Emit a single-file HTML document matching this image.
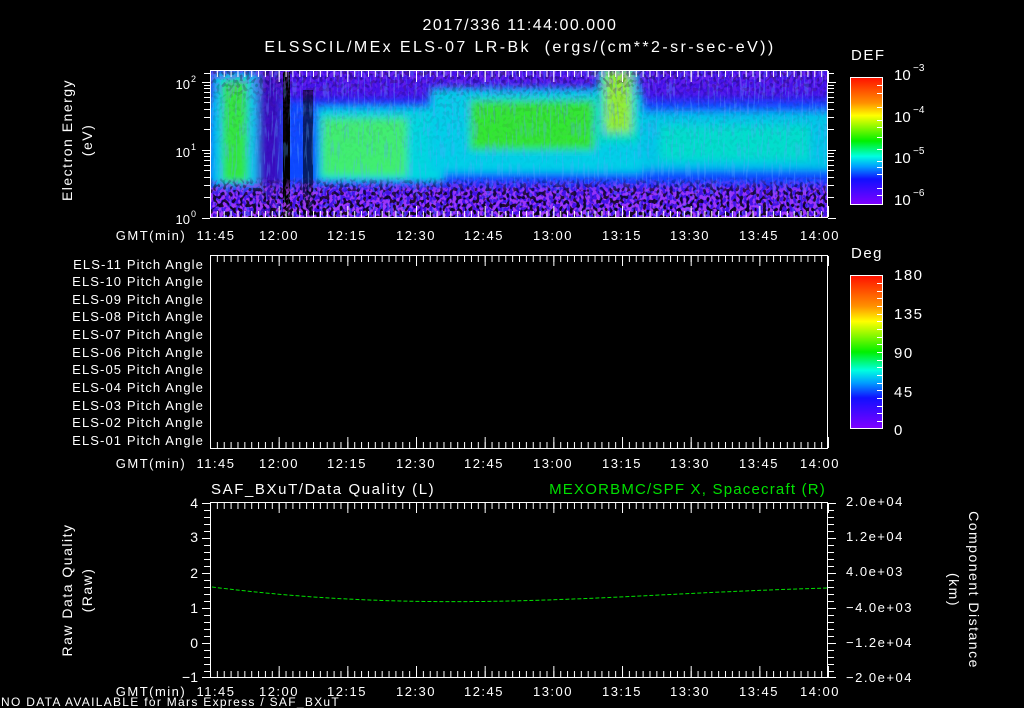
<!DOCTYPE html>
<html><head><meta charset="utf-8"><style>
html,body{margin:0;padding:0;background:#000;}
svg{display:block;}
text{font-family:"Liberation Sans",sans-serif;fill:#fff;}
.w{letter-spacing:1.5px;}
</style></head><body>
<svg width="1024" height="708" viewBox="0 0 1024 708" xmlns="http://www.w3.org/2000/svg">
<defs>
<filter id="bl" x="190" y="50" width="660" height="190" filterUnits="userSpaceOnUse"><feGaussianBlur stdDeviation="4"/></filter>
<filter id="sp1" x="0" y="0" width="1" height="1"><feTurbulence type="fractalNoise" baseFrequency="0.3 0.25" numOctaves="1" seed="4"/><feColorMatrix type="matrix" values="0 0 0 0 0  0 0 0 0 0  0 0 0 0 0  14 0 0 0 -7.3"/></filter>
<filter id="sp2" x="0" y="0" width="1" height="1"><feTurbulence type="fractalNoise" baseFrequency="0.3 0.25" numOctaves="1" seed="9"/><feColorMatrix type="matrix" values="0 0 0 0 0.45  0 0 0 0 0.05  0 0 0 0 1  14 0 0 0 -6.6"/></filter>
<filter id="sp3" x="0" y="0" width="1" height="1"><feTurbulence type="fractalNoise" baseFrequency="0.5 0.05" numOctaves="1" seed="2"/><feColorMatrix type="matrix" values="0 0 0 0 0.1  0 0 0 0 0.4  0 0 0 0 1  12 0 0 0 -6.6"/></filter>
<linearGradient id="cb" x1="0" y1="0" x2="0" y2="1">
<stop offset="0" stop-color="#ff1000"/><stop offset="0.2" stop-color="#ff9000"/><stop offset="0.3" stop-color="#ffff00"/><stop offset="0.5" stop-color="#00f000"/><stop offset="0.62" stop-color="#00ffe0"/><stop offset="0.7" stop-color="#00a0ff"/><stop offset="0.8" stop-color="#1010ff"/><stop offset="1" stop-color="#8000ff"/>
</linearGradient>
<linearGradient id="fade" x1="0" y1="0" x2="0" y2="1"><stop offset="0" stop-color="#fff" stop-opacity="0.35"/><stop offset="0.2" stop-color="#fff" stop-opacity="0.08"/><stop offset="0.72" stop-color="#fff" stop-opacity="0"/><stop offset="0.82" stop-color="#fff" stop-opacity="0.7"/><stop offset="1" stop-color="#fff" stop-opacity="0.9"/></linearGradient>
<mask id="m1"><rect x="210" y="70" width="618" height="148" fill="url(#fade)"/></mask>
<clipPath id="cp"><rect x="210" y="70" width="618" height="148"/></clipPath>
<pattern id="tk" x="210" y="0" width="6.867" height="1" patternUnits="userSpaceOnUse"><rect x="0" y="0" width="1" height="1" fill="#fff"/></pattern>
<pattern id="mj" x="210" y="0" width="68.67" height="1" patternUnits="userSpaceOnUse"><rect x="0" y="0" width="1" height="1" fill="#fff"/></pattern>
</defs>

<text x="520" y="30" font-size="16" text-anchor="middle" class="w">2017/336 11:44:00.000</text>
<text x="520" y="52" font-size="16" text-anchor="middle" xml:space="preserve" style="letter-spacing:2.4px">ELSSCIL/MEx ELS-07 LR-Bk  (ergs/(cm**2-sr-sec-eV))</text>

<!-- Spectrogram -->
<g clip-path="url(#cp)">
<rect x="210" y="70" width="618" height="148" fill="#4412e8"/>
<g filter="url(#bl)">
<rect x="205" y="100" width="630" height="85" fill="#1048ff"/>
<rect x="212" y="72" width="45" height="115" fill="#00c8f0"/>
<rect x="318" y="108" width="125" height="74" fill="#00d8e0"/>
<rect x="430" y="88" width="212" height="85" fill="#00d0e8"/>
<rect x="598" y="68" width="40" height="75" fill="#00e0c0"/>
<rect x="640" y="112" width="195" height="58" fill="#00c8e8"/>
<rect x="222" y="80" width="26" height="102" fill="#30e840"/>
<rect x="322" y="118" width="85" height="58" fill="#40f070"/>
<rect x="470" y="100" width="125" height="50" fill="#30e830"/>
<rect x="605" y="70" width="26" height="62" fill="#90f030"/>
<rect x="660" y="125" width="150" height="35" fill="#00e8c0" opacity="0.7"/>
<rect x="258" y="72" width="24" height="145" fill="#3810c0"/>
</g>
<rect x="283" y="72" width="7" height="146" fill="#000"/>
<rect x="303" y="90" width="10" height="128" fill="#000" opacity="0.6"/>
<rect x="210" y="70" width="618" height="148" filter="url(#sp3)" opacity="0.3"/>
<rect x="210" y="70" width="618" height="148" filter="url(#sp2)" mask="url(#m1)"/>
<rect x="210" y="70" width="618" height="148" filter="url(#sp1)" mask="url(#m1)"/>
</g>
<rect x="210.5" y="70.5" width="617" height="147" fill="none" stroke="#fff"/>
<rect x="210" y="71" width="619" height="6" fill="url(#tk)"/>
<rect x="210" y="71" width="619" height="11" fill="url(#mj)"/>
<rect x="210" y="211" width="619" height="6" fill="url(#tk)"/>
<rect x="210" y="206" width="619" height="11" fill="url(#mj)"/>
<g stroke="#fff" stroke-width="1">
<path d="M202 218.5h8M202 150.5h8M202 82.5h8 M204 197.5h6M204 185.5h6M204 177.5h6M204 170.5h6M204 165.5h6M204 160.5h6M204 156.5h6M204 153.5h6 M204 129.5h6M204 117.5h6M204 109.5h6M204 102.5h6M204 97.5h6M204 92.5h6M204 88.5h6M204 85.5h6M204 73.5h6"/>
<path d="M828 218.5h8M828 150.5h8M828 82.5h8 M828 197.5h6M828 185.5h6M828 177.5h6M828 170.5h6M828 165.5h6M828 160.5h6M828 156.5h6M828 153.5h6 M828 129.5h6M828 117.5h6M828 109.5h6M828 102.5h6M828 97.5h6M828 92.5h6M828 88.5h6M828 85.5h6M828 73.5h6"/>
</g>
<text x="190" y="89" font-size="13" text-anchor="end">10</text><text x="191" y="82" font-size="9">2</text>
<text x="190" y="157" font-size="13" text-anchor="end">10</text><text x="191" y="150" font-size="9">1</text>
<text x="190" y="224" font-size="13" text-anchor="end">10</text><text x="191" y="217" font-size="9">0</text>
<text transform="translate(72,140) rotate(-90)" font-size="14" text-anchor="middle" class="w">Electron Energy</text>
<text transform="translate(92,140) rotate(-90)" font-size="14" text-anchor="middle" class="w">(eV)</text>

<text x="851" y="60" font-size="15" class="w">DEF</text>
<rect x="850.5" y="77.5" width="32" height="127" fill="url(#cb)" stroke="#fff"/>
<g stroke="#fff"><path d="M877 85.5h5M877 93.5h5M877 107.5h5M877 120.5h5M877 127.5h5M877 137.5h5M877 149.5h5M877 161.5h5M877 167.5h5M877 174.5h5M877 188.5h5M877 195.5h5"/></g>
<text x="894" y="80" font-size="15">10</text><text x="913" y="71" font-size="10">−3</text>
<text x="894" y="122" font-size="15">10</text><text x="913" y="113" font-size="10">−4</text>
<text x="894" y="163" font-size="15">10</text><text x="913" y="154" font-size="10">−5</text>
<text x="894" y="205" font-size="15">10</text><text x="913" y="196" font-size="10">−6</text>

<g font-size="13" text-anchor="middle" class="w">
<text x="151" y="240">GMT(min)</text>
<text x="216" y="240">11:45</text><text x="279" y="240">12:00</text><text x="347" y="240">12:15</text><text x="416" y="240">12:30</text><text x="484" y="240">12:45</text><text x="553" y="240">13:00</text><text x="622" y="240">13:15</text><text x="690" y="240">13:30</text><text x="759" y="240">13:45</text><text x="820" y="240">14:00</text>
</g>

<!-- Pitch panel -->
<rect x="210.5" y="255.5" width="617" height="193" fill="none" stroke="#fff"/>
<rect x="210" y="256" width="619" height="6" fill="url(#tk)"/>
<rect x="210" y="256" width="619" height="10" fill="url(#mj)"/>
<rect x="210" y="442" width="619" height="6" fill="url(#tk)"/>
<rect x="210" y="437" width="619" height="11" fill="url(#mj)"/>
<g font-size="13" text-anchor="end" style="letter-spacing:1.1px">
<text x="204" y="269">ELS-11 Pitch Angle</text>
<text x="204" y="286">ELS-10 Pitch Angle</text>
<text x="204" y="304">ELS-09 Pitch Angle</text>
<text x="204" y="321">ELS-08 Pitch Angle</text>
<text x="204" y="339">ELS-07 Pitch Angle</text>
<text x="204" y="357">ELS-06 Pitch Angle</text>
<text x="204" y="374">ELS-05 Pitch Angle</text>
<text x="204" y="392">ELS-04 Pitch Angle</text>
<text x="204" y="410">ELS-03 Pitch Angle</text>
<text x="204" y="427">ELS-02 Pitch Angle</text>
<text x="204" y="445">ELS-01 Pitch Angle</text>
</g>
<text x="851" y="258" font-size="15" class="w">Deg</text>
<rect x="850.5" y="275.5" width="32" height="153" fill="url(#cb)" stroke="#fff"/>
<g stroke="#fff"><path d="M877 283.5h5M877 291.5h5M877 298.5h5M877 306.5h5M877 314.5h5M877 321.5h5M877 329.5h5M877 337.5h5M877 344.5h5M877 352.5h5M877 360.5h5M877 367.5h5M877 375.5h5M877 383.5h5M877 390.5h5M877 398.5h5M877 406.5h5M877 413.5h5M877 421.5h5"/></g>
<g font-size="15" class="w">
<text x="894" y="280">180</text><text x="894" y="319">135</text><text x="894" y="358">90</text><text x="894" y="397">45</text><text x="894" y="435">0</text>
</g>
<g font-size="13" text-anchor="middle" class="w">
<text x="151" y="468">GMT(min)</text>
<text x="216" y="468">11:45</text><text x="279" y="468">12:00</text><text x="347" y="468">12:15</text><text x="416" y="468">12:30</text><text x="484" y="468">12:45</text><text x="553" y="468">13:00</text><text x="622" y="468">13:15</text><text x="690" y="468">13:30</text><text x="759" y="468">13:45</text><text x="820" y="468">14:00</text>
</g>

<!-- Bottom panel -->
<text x="211" y="494" font-size="15" style="letter-spacing:1.6px">SAF_BXuT/Data Quality (L)</text>
<text x="826" y="494" font-size="15" text-anchor="end" style="fill:#00e000;letter-spacing:1.2px">MEXORBMC/SPF X, Spacecraft (R)</text>
<rect x="210.5" y="502.5" width="617" height="175" fill="none" stroke="#fff"/>
<rect x="210" y="503" width="619" height="6" fill="url(#tk)"/>
<rect x="210" y="503" width="619" height="10" fill="url(#mj)"/>
<rect x="210" y="671" width="619" height="6" fill="url(#tk)"/>
<rect x="210" y="666" width="619" height="11" fill="url(#mj)"/>
<g stroke="#fff">
<path d="M202 503.5h8M202 538.5h8M202 573.5h8M202 608.5h8M202 643.5h8M202 677.5h8 M204 510.5h6M204 517.5h6M204 524.5h6M204 531.5h6M204 545.5h6M204 552.5h6M204 559.5h6M204 566.5h6M204 580.5h6M204 587.5h6M204 594.5h6M204 601.5h6M204 615.5h6M204 622.5h6M204 629.5h6M204 636.5h6M204 650.5h6M204 657.5h6M204 664.5h6M204 671.5h6"/>
<path d="M828 503.5h8M828 538.5h8M828 573.5h8M828 608.5h8M828 643.5h8M828 677.5h8 M828 510.5h6M828 517.5h6M828 524.5h6M828 531.5h6M828 545.5h6M828 552.5h6M828 559.5h6M828 566.5h6M828 580.5h6M828 587.5h6M828 594.5h6M828 601.5h6M828 615.5h6M828 622.5h6M828 629.5h6M828 636.5h6M828 650.5h6M828 657.5h6M828 664.5h6M828 671.5h6"/>
</g>
<g font-size="14" text-anchor="end">
<text x="198" y="508">4</text><text x="198" y="542">3</text><text x="198" y="578">2</text><text x="198" y="613">1</text><text x="198" y="648">0</text><text x="198" y="682">−1</text>
</g>
<g font-size="13" class="w">
<text x="846" y="506">2.0e+04</text><text x="846" y="541">1.2e+04</text><text x="846" y="576">4.0e+03</text><text x="846" y="612">−4.0e+03</text><text x="846" y="647">−1.2e+04</text><text x="846" y="682">−2.0e+04</text>
</g>
<path d="M212 587 C 260 593, 320 599, 400 601 S 560 600, 640 596 S 760 590, 828 588" fill="none" stroke="#00e000" stroke-width="1" stroke-dasharray="4 2"/>
<text transform="translate(72,590) rotate(-90)" font-size="14" text-anchor="middle" class="w">Raw Data Quality</text>
<text transform="translate(92,590) rotate(-90)" font-size="14" text-anchor="middle" class="w">(Raw)</text>
<text transform="translate(969,590) rotate(90)" font-size="14" text-anchor="middle" class="w">Component Distance</text>
<text transform="translate(949,590) rotate(90)" font-size="14" text-anchor="middle" class="w">(km)</text>
<g font-size="13" text-anchor="middle" class="w">
<text x="151" y="696">GMT(min)</text>
<text x="216" y="696">11:45</text><text x="279" y="696">12:00</text><text x="347" y="696">12:15</text><text x="416" y="696">12:30</text><text x="484" y="696">12:45</text><text x="553" y="696">13:00</text><text x="622" y="696">13:15</text><text x="690" y="696">13:30</text><text x="759" y="696">13:45</text><text x="820" y="696">14:00</text>
</g>
<text x="1" y="706" font-size="12" style="letter-spacing:1.3px">NO DATA AVAILABLE for Mars  Express / SAF_BXuT</text>
</svg>
</body></html>
